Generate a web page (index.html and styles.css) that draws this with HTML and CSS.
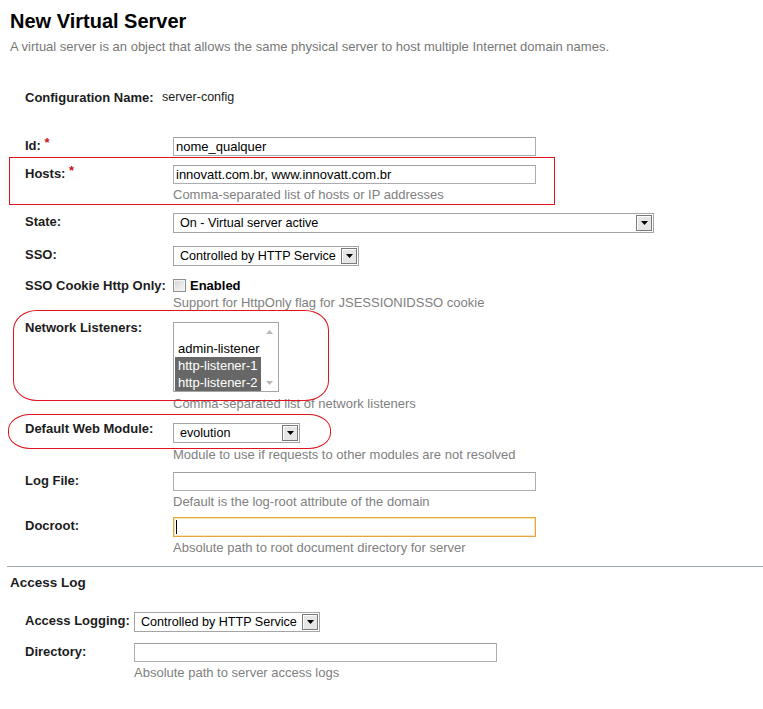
FILE: index.html
```html
<!DOCTYPE html>
<html lang="en">
<head>
<meta charset="utf-8">
<title>New Virtual Server</title>
<link rel="stylesheet" href="styles.css">
</head>
<body>
<div class="page">
  <h1 class="title">New Virtual Server</h1>
  <p class="desc">A virtual server is an object that allows the same physical server to host multiple Internet domain names.</p>

  <div class="config">
    <span class="config-label">Configuration Name:</span>
    <span class="config-value">server-config</span>
  </div>

  <div class="form">
    <div class="row r-id">
      <div class="label">Id: <span class="req">*</span></div>
      <div class="field"><input class="text" type="text" value="nome_qualquer"></div>
    </div>

    <div class="row r-hosts">
      <div class="label">Hosts: <span class="req">*</span></div>
      <div class="field">
        <input class="text" type="text" value="innovatt.com.br, www.innovatt.com.br">
        <div class="help">Comma-separated list of hosts or IP addresses</div>
      </div>
      <div class="mark mark-hosts"></div>
    </div>

    <div class="row r-state">
      <div class="label">State:</div>
      <div class="field">
        <div class="select select-wide">
          <span class="select-value">On - Virtual server active</span>
          <span class="select-arrow"><svg width="7" height="4" viewBox="0 0 7 4"><path d="M0 0h7L3.5 4z" fill="#000"/></svg></span>
        </div>
      </div>
    </div>

    <div class="row r-sso">
      <div class="label">SSO:</div>
      <div class="field">
        <div class="select select-mid">
          <span class="select-value">Controlled by HTTP Service</span>
          <span class="select-arrow"><svg width="7" height="4" viewBox="0 0 7 4"><path d="M0 0h7L3.5 4z" fill="#000"/></svg></span>
        </div>
      </div>
    </div>

    <div class="row r-cookie">
      <div class="label label-cookie">SSO Cookie Http Only:</div>
      <div class="field">
        <div class="check-line"><span class="checkbox"></span><span class="check-text">Enabled</span></div>
        <div class="help help-tight">Support for HttpOnly flag for JSESSIONIDSSO cookie</div>
      </div>
    </div>

    <div class="row r-nl">
      <div class="label label-high">Network Listeners:</div>
      <div class="field">
        <div class="listbox">
          <div class="listbox-items">
            <div class="opt">&nbsp;</div>
            <div class="opt">admin-listener</div>
            <div class="opt sel">http-listener-1</div>
            <div class="opt sel">http-listener-2</div>
          </div>
          <div class="listbox-scroll">
            <svg width="7" height="4" viewBox="0 0 7 4"><path d="M0 4h7L3.5 0z" fill="#b8b8b8"/></svg>
            <svg width="7" height="4" viewBox="0 0 7 4"><path d="M0 0h7L3.5 4z" fill="#b8b8b8"/></svg>
          </div>
        </div>
        <div class="help help-nl">Comma-separated list of network listeners</div>
      </div>
      <div class="mark mark-nl"></div>
    </div>

    <div class="row r-dwm">
      <div class="label label-high">Default Web Module:</div>
      <div class="field">
        <div class="select select-small">
          <span class="select-value">evolution</span>
          <span class="select-arrow"><svg width="7" height="4" viewBox="0 0 7 4"><path d="M0 0h7L3.5 4z" fill="#000"/></svg></span>
        </div>
        <div class="help help-nl">Module to use if requests to other modules are not resolved</div>
      </div>
      <div class="mark mark-dwm"></div>
    </div>

    <div class="row r-log">
      <div class="label">Log File:</div>
      <div class="field">
        <input class="text" type="text" value="">
        <div class="help">Default is the log-root attribute of the domain</div>
      </div>
    </div>

    <div class="row r-doc">
      <div class="label">Docroot:</div>
      <div class="field">
        <div class="text text-focus"><span class="caret"></span></div>
        <div class="help">Absolute path to root document directory for server</div>
      </div>
    </div>
  </div>

  <div class="divider"></div>

  <h2 class="section">Access Log</h2>

  <div class="form form-access">
    <div class="row row-access r-al">
      <div class="label">Access Logging:</div>
      <div class="field">
        <div class="select select-mid">
          <span class="select-value">Controlled by HTTP Service</span>
          <span class="select-arrow"><svg width="7" height="4" viewBox="0 0 7 4"><path d="M0 0h7L3.5 4z" fill="#000"/></svg></span>
        </div>
      </div>
    </div>
    <div class="row row-access r-dir">
      <div class="label">Directory:</div>
      <div class="field">
        <input class="text" type="text" value="">
        <div class="help">Absolute path to server access logs</div>
      </div>
    </div>
  </div>
</div>
</body>
</html>
```

FILE: styles.css
```css
* { box-sizing: border-box; }

body {
  margin: 0;
  font-family: "Liberation Sans", Arial, sans-serif;
  color: #000;
  background: #fff;
}

.page {
  padding: 9px 0 30px 10px;
}

.title {
  margin: 0;
  font-size: 20px;
  line-height: 24px;
  font-weight: bold;
  color: #000;
}

.desc {
  margin: 6px 0 0;
  font-size: 13px;
  line-height: 15px;
  color: #777;
}

.config {
  margin-top: 36px;
  padding-left: 15px;
  display: flex;
  font-size: 13px;
  line-height: 15px;
  color: #1c1c1c;
}

.config-label {
  font-weight: bold;
  width: 137px;
}

.config-value {
  font-size: 12.5px;
}

.form {
  margin-top: 32px;
  padding-left: 15px;
  display: flex;
  flex-direction: column;
}

.row {
  display: grid;
  grid-template-columns: 148px auto;
  position: relative;
}

.row-access { grid-template-columns: 109px auto; }

.r-hosts { margin-top: 9px; }
.r-state { margin-top: 11px; }
.r-sso { margin-top: 13px; }
.r-cookie { margin-top: 10px; }
.r-nl { margin-top: 12px; }
.r-dwm { margin-top: 12px; }
.r-log { margin-top: 10px; }
.r-doc { margin-top: 8px; }
.r-dir { margin-top: 11px; }

.label {
  font-size: 13px;
  line-height: 15px;
  font-weight: bold;
  color: #1c1c1c;
  padding-top: 1px;
  white-space: nowrap;
}

.label-high { padding-top: 0; margin-top: -2px; }
.label-cookie { padding-top: 2px; }

.req {
  color: #c4161c;
  font-size: 13px;
  vertical-align: 3px;
  line-height: 10px;
}

.field {
  display: flex;
  flex-direction: column;
  align-items: flex-start;
}

.text {
  width: 363px;
  height: 19px;
  margin: 0;
  border: 1px solid #abadb3;
  border-top-color: #a0a0a0;
  padding: 0 2px;
  font-family: "Liberation Sans", Arial, sans-serif;
  font-size: 13px;
  color: #000;
  background: #fff;
  outline: none;
}

.text-focus {
  height: 20px;
  border: 1px solid #e3a641;
  box-shadow: inset 0 0 0 1px #fbe3b4;
  display: flex;
  align-items: center;
  padding-left: 2px;
}

.caret {
  display: block;
  width: 1px;
  height: 14px;
  background: #000;
}

.help {
  margin-top: 3px;
  font-size: 13px;
  line-height: 15px;
  color: #808080;
  white-space: nowrap;
}

.help-tight { margin-top: 0; }
.help-nl { margin-top: 4px; }

.select {
  display: flex;
  height: 20px;
  border: 1px solid #a5a5a5;
  background: #fff;
  font-size: 12.6px;
  color: #000;
}

.select-wide { width: 481px; }
.select-mid { width: 186px; }
.select-small { width: 127px; }

.select-value {
  flex: 1;
  padding-left: 6px;
  line-height: 18px;
  white-space: nowrap;
  overflow: hidden;
}

.select-arrow {
  flex: none;
  width: 16px;
  margin: 1px;
  border: 1px solid #7a7a7a;
  box-shadow: inset 1px 1px 0 #fff;
  background: #e6e6e6;
  display: flex;
  align-items: center;
  justify-content: center;
}

.check-line {
  display: flex;
  align-items: center;
  height: 19px;
}

.checkbox {
  width: 13px;
  height: 13px;
  border: 1px solid #8e8f8f;
  background: linear-gradient(135deg, #d6d6d6, #f6f6f6);
  box-shadow: inset 0 0 0 1px #f4f4f4;
}

.check-text {
  margin-left: 4px;
  font-size: 13px;
  font-weight: bold;
  color: #000;
}

.listbox {
  width: 106px;
  height: 70px;
  border: 1px solid #a5a5a5;
  background: #fff;
  display: flex;
}

.listbox-items {
  flex: 1;
  padding: 0 0 0 1px;
  font-size: 13px;
}

.opt {
  height: 17px;
  line-height: 17px;
  padding-left: 3px;
  white-space: nowrap;
}

.opt.sel {
  background: #676767;
  color: #fff;
}

.listbox-scroll {
  width: 17px;
  display: flex;
  flex-direction: column;
  justify-content: space-between;
  align-items: center;
  padding: 7px 0 6px;
}

.mark {
  position: absolute;
  border: 1px solid #e0141e;
  pointer-events: none;
}

.mark-hosts {
  left: -16px;
  top: -8px;
  width: 546px;
  height: 48px;
}

.mark-nl {
  left: -12px;
  top: -12px;
  width: 316px;
  height: 91px;
  border-radius: 24px / 20px;
}

.mark-dwm {
  left: -17px;
  top: -9px;
  width: 323px;
  height: 35px;
  border-radius: 22px / 16px;
}

.divider {
  margin: 11px 0 0 -3px;
  border-top: 1px solid #a1a9b0;
}

.section {
  margin: 8px 0 0;
  font-size: 13.5px;
  line-height: 16px;
  font-weight: bold;
  color: #1c1c1c;
}

.form-access {
  margin-top: 21px;
}
```
